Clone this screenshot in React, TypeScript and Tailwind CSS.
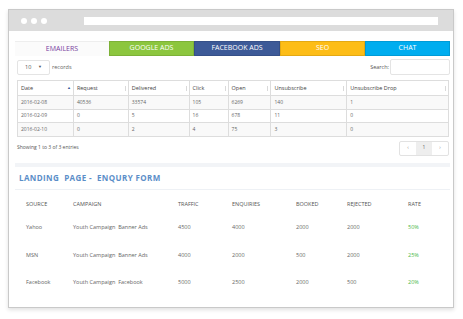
const tabs = [
  { label: "GOOGLE ADS", cls: "w-[85px] bg-[#8cc63e]" },
  { label: "FACEBOOK ADS", cls: "w-[86px] bg-[#3d5a98]" },
  { label: "SEO", cls: "w-[85px] bg-[#fdbd17]" },
  { label: "CHAT", cls: "w-[85px] bg-[#00adef]" },
];

const cols = [
  { name: "Date", w: "w-[56px]", sort: "up" },
  { name: "Request", w: "w-[55px]", sort: "both" },
  { name: "Delivered", w: "w-[61px]", sort: "both" },
  { name: "Click", w: "w-[39px]", sort: "both" },
  { name: "Open", w: "w-[43px]", sort: "both" },
  { name: "Unsubscribe", w: "w-[76px]", sort: "both" },
  { name: "Unsubscribe Drop", w: "w-[102px]", sort: "both" },
];

const rows = [
  ["2016-02-08", "40536", "33574", "105", "6269", "140", "1"],
  ["2016-02-09", "0", "5", "16", "678", "11", "0"],
  ["2016-02-10", "0", "2", "4", "75", "3", "0"],
];

const leads = [
  ["Yahoo", "Youth Campaign  Banner Ads", "4500", "4000", "2000", "2000", "50%"],
  ["MSN", "Youth Campaign  Banner Ads", "4000", "2000", "500", "2000", "25%"],
  ["Facebook", "Youth Campaign  Facebook", "5000", "2500", "2000", "500", "20%"],
];

const leadCols = "grid grid-cols-[47px_105px_54px_64px_51px_61px_40px]";

export default function App() {
  return (
    <div className="w-[463px] h-[319px] bg-white pl-[8px] pt-[9px]" style={{ fontFamily: '"Open Sans", sans-serif' }}>
      <div className="w-[446px] h-[299px] border border-[#c9c9c9] shadow-[0_2px_4px_rgba(0,0,0,0.12)] flex flex-col">
        {/* browser chrome */}
        <div className="h-[21px] bg-[#dcdcdc] flex items-center pl-[12px] shrink-0">
          <div className="flex gap-[4px]">
            <span className="w-[6px] h-[6px] rounded-full bg-white" />
            <span className="w-[6px] h-[6px] rounded-full bg-white" />
            <span className="w-[6px] h-[6px] rounded-full bg-white" />
          </div>
          <div className="ml-[37px] w-[354px] h-[8px] bg-white" />
        </div>

        {/* tabs */}
        <div className="flex ml-[6px] mt-[10px] h-[15px]">
          <div className="w-[94px] bg-[#fbfbfb] border-t border-[#eeeeee] flex items-center justify-center text-[7px] text-[#7a3d9e]">EMAILERS</div>
          {tabs.map((t) => (
            <div key={t.label} className={`${t.cls} flex items-center justify-center text-[7px] text-white border border-black/10`}>
              {t.label}
            </div>
          ))}
        </div>

        <div className="pl-[8px] w-[441px]">
          {/* controls */}
          <div className="flex items-center justify-between mt-[3px] h-[16px]">
            <div className="flex items-center text-[5.5px] text-[#666]">
              <div className="w-[33px] h-[15px] border border-[#e4e4e4] rounded-[2px] flex items-center justify-between px-[7px] text-[#555]">
                <span>10</span>
                <span className="text-[4px]">▼</span>
              </div>
              <span className="ml-[2px]">records</span>
            </div>
            <div className="flex items-center text-[5.5px] text-[#555]">
              <span className="mr-[1px]">Search:</span>
              <div className="w-[60px] h-[16px] border border-[#e4e4e4] rounded-[2px]" />
            </div>
          </div>

          {/* data table */}
          <div className="mt-[5px] border-l border-t border-[#dddddd] w-[432px]">
            <div className="flex h-[15px] bg-white">
              {cols.map((c) => (
                <div key={c.name} className={`${c.w} border-r border-b border-[#dddddd] flex items-center justify-between pl-[3px] pr-[2px] text-[5.5px] text-[#444]`}>
                  <span className="whitespace-nowrap">{c.name}</span>
                  {c.sort === "up" ? (
                    <span className="text-[4px] text-[#3d5a98]">▲</span>
                  ) : (
                    <span className="w-[1px] h-[5px] bg-[#d9d9d9]" />
                  )}
                </div>
              ))}
            </div>
            {rows.map((r, i) => (
              <div key={i} className={`flex h-[13.5px] ${i % 2 === 0 ? "bg-[#f9f9f9]" : "bg-white"}`}>
                {r.map((v, j) => (
                  <div key={j} className={`${cols[j].w} border-r border-b border-[#dddddd] flex items-center px-[3px] text-[5px] text-[#666]`}>
                    {v}
                  </div>
                ))}
              </div>
            ))}
          </div>

          {/* footer */}
          <div className="flex items-center justify-between w-[432px] mt-[4px]">
            <span className="text-[5px] text-[#555]">Showing 1 to 3 of 3 entries</span>
            <div className="flex h-[15px] border border-[#e2e2e2] rounded-[2px] text-[5px] text-[#888]">
              <span className="w-[16px] flex items-center justify-center">‹</span>
              <span className="w-[16px] flex items-center justify-center bg-[#eeeeee] text-[#666]">1</span>
              <span className="w-[16px] flex items-center justify-center">›</span>
            </div>
          </div>
        </div>

        {/* landing page section */}
        <div className="ml-[6px] w-[435px] h-[4px] bg-[#f2f4f7] mt-[7px]" />
        <div className="ml-[6px] w-[435px] h-[23px] flex items-center pl-[4px] border-b border-[#eef1f5]">
          <span className="text-[8px] font-bold text-[#5b8ec8] tracking-[0.4px] whitespace-pre">LANDING  PAGE -  ENQURY FORM</span>
        </div>

        <div className="pl-[17px] mt-[10px] text-[#555]">
          <div className={`${leadCols} text-[5.5px] text-[#555] h-[10px] items-center`}>
            <span>SOURCE</span>
            <span>CAMPAIGN</span>
            <span>TRAFFIC</span>
            <span>ENQUIRIES</span>
            <span>BOOKED</span>
            <span>REJECTED</span>
            <span>RATE</span>
          </div>
          <div className="flex flex-col gap-[17.5px] mt-[13px]">
            {leads.map((l) => (
              <div key={l[0]} className={`${leadCols} text-[5.5px] text-[#666] h-[10px] items-center`}>
                {l.map((v, j) => (
                  <span key={j} className={`whitespace-pre ${j === 6 ? "text-[#4cb848]" : ""}`}>{v}</span>
                ))}
              </div>
            ))}
          </div>
        </div>
      </div>
    </div>
  );
}
